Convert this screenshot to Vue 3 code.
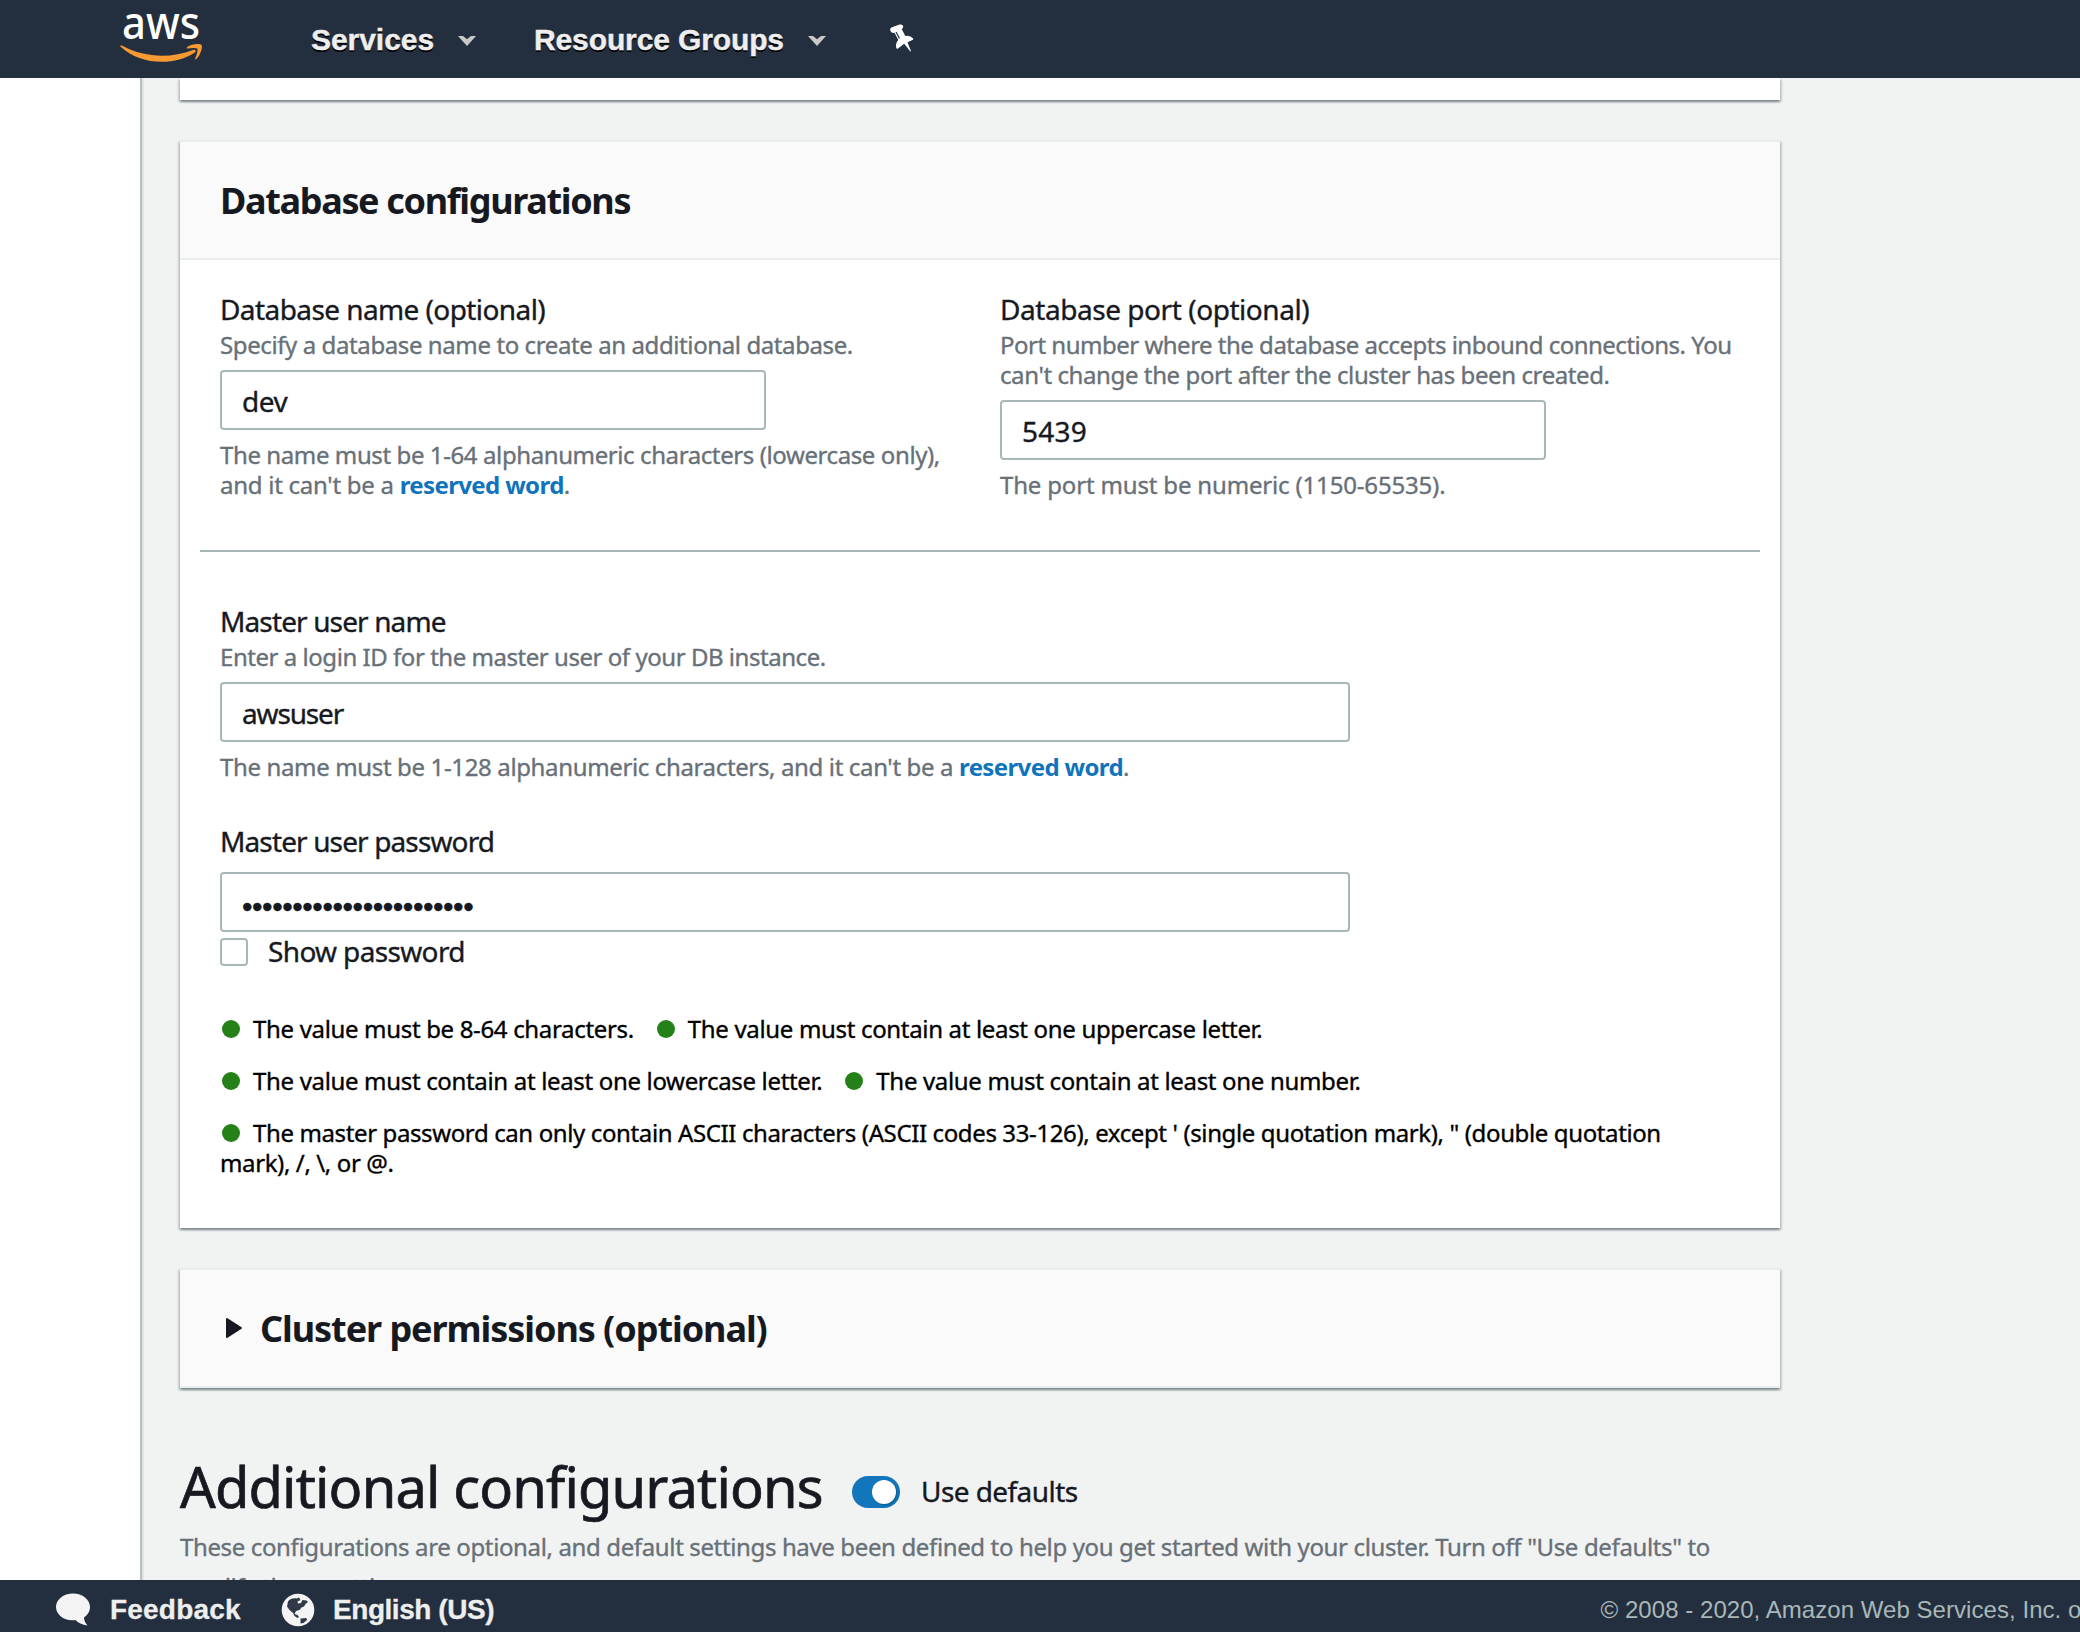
<script setup>
import { ref } from 'vue'

const dbName = ref('dev')
const dbPort = ref('5439')
const userName = ref('awsuser')
const maskedPassword = '•'.repeat(23)

const rules = [
  ['The value must be 8-64 characters.', 'The value must contain at least one uppercase letter.'],
  ['The value must contain at least one lowercase letter.', 'The value must contain at least one number.'],
  ['The master password can only contain ASCII characters (ASCII codes 33-126), except \' (single quotation mark), " (double quotation mark), /, \\, or @.']
]
</script>

<template>
  <div class="page">
    <header class="topbar">
      <svg class="logo" width="84" height="54" viewBox="0 0 84 54">
        <text x="2" y="31" textLength="78" lengthAdjust="spacingAndGlyphs" class="logo-text">aws</text>
        <path d="M0.300 38.500 C0 37.500 1.200 37 2.500 37.800 C25 50 51 50.500 73 42 C75.500 41 76.800 43 74.800 44.500 C54 58.500 20 57 0.300 38.500 Z" fill="#f79a33" />
        <path d="M67 39.200 C71 35.700 80 35.500 81.500 37 C83 39 80.500 47 76.500 51 C75.500 51.800 74.800 51.300 75.300 50.200 C76.800 46.500 78.300 42 77.300 40.700 C76.300 39.500 71.500 39.900 68 40.400 C66.500 40.600 66 40 67 39.200 Z" fill="#f79a33" />
      </svg>
      <a class="nav services">Services</a>
      <svg class="caret" width="20" height="12" viewBox="0 0 20 12"><path d="M1 1 H6 L10 4.200 L14 1 H19 L10 11 Z" fill="#c9c9c9" /></svg>
      <a class="nav groups">Resource Groups</a>
      <svg class="caret" width="20" height="12" viewBox="0 0 20 12"><path d="M1 1 H6 L10 4.200 L14 1 H19 L10 11 Z" fill="#c9c9c9" /></svg>
      <svg class="pin" width="26" height="30" viewBox="0 0 26 30">
        <path d="M1.500 7 Q0.500 4.500 2.500 3.500 L10.500 0.600 Q13.500 0 14.200 2 Q14.500 4 12.800 5.200 L16.300 12 Q21 10.700 24.200 14.500 Q24.500 15.500 23.500 16 L18.500 18.300 L22 27 L21.300 27.500 L15.200 19.800 L9 24.500 Q7.600 25.200 7.300 24 Q6.200 19 9.300 16 L5.500 8.800 Q2.500 9.300 1.500 7 Z" fill="#fff" />
        <path d="M7 8 L10.500 14.500" stroke="#232f3e" stroke-width="1.200" />
      </svg>
    </header>

    <div class="shell">
      <aside class="side"></aside>
      <main class="content">
        <section class="card previous"></section>

        <section class="card">
          <div class="card-head"><h2 class="t-db">Database configurations</h2></div>
          <div class="card-body">
            <div class="columns">
              <div class="field">
                <label class="label">Database name (optional)</label>
                <p class="desc">Specify a database name to create an additional database.</p>
                <input v-model="dbName" class="input short" type="text" />
                <p class="desc">The name must be 1-64 alphanumeric characters (lowercase only),<br /><span class="lead">and it can't be a </span><a class="link">reserved word</a>.</p>
              </div>
              <div class="field">
                <label class="label port-label">Database port (optional)</label>
                <p class="desc port">Port number where the database accepts inbound connections. You<br /><span class="second">can't change the port after the cluster has been created.</span></p>
                <input v-model="dbPort" class="input short digits" type="text" />
                <p class="desc numeric">The port must be numeric (1150-65535).</p>
              </div>
            </div>
            <div class="divider"></div>
            <div class="field">
              <label class="label master">Master user name</label>
              <p class="desc login">Enter a login ID for the master user of your DB instance.</p>
              <input v-model="userName" class="input user" type="text" />
              <p class="desc user-hint">The name must be 1-128 alphanumeric characters, and it can't be a <a class="link">reserved word</a>.</p>
            </div>
            <div class="field password">
              <label class="label master">Master user password</label>
              <div class="input masked">{{ maskedPassword }}</div>
              <label class="check"><span class="box"></span><span class="check-text">Show password</span></label>
            </div>
            <div class="rules">
              <p v-for="(row, i) in rules" :key="i" class="rule-row">
                <span v-for="text in row" :key="text" class="rule"><i class="dot"></i>{{ text }}</span>
              </p>
            </div>
          </div>
        </section>

        <section class="card">
          <div class="card-head">
            <svg class="tri" width="18" height="22" viewBox="0 0 18 22"><path d="M2 2 L16 11 L2 20 Z" fill="#16191f" stroke="#16191f" stroke-width="2" stroke-linejoin="round" /></svg>
            <h2 class="t-cluster">Cluster permissions (optional)</h2>
          </div>
        </section>

        <div class="additional">
          <h1>Additional configurations</h1>
          <span class="toggle"><span class="knob"></span></span>
          <span class="toggle-label">Use defaults</span>
        </div>
        <p class="intro">These configurations are optional, and default settings have been defined to help you get started with your cluster. Turn off "Use defaults" to<br />modify these settings now.</p>
      </main>
    </div>

    <footer class="bottombar">
      <svg class="bubble" width="36" height="34" viewBox="0 0 36 34">
        <path d="M18 0.500 C27.500 0.500 35 6.500 35 14 C35 18.500 32.500 22 29 24.500 C29.200 27.500 30.200 30 32.500 32.500 C27 32 23 29.800 20.500 27 C9.500 28.500 1 22 1 14 C1 6.500 8.500 0.500 18 0.500 Z" fill="#f4f4f4" />
      </svg>
      <a class="foot feedback">Feedback</a>
      <svg class="globe" width="34" height="34" viewBox="0 0 34 34">
        <circle cx="17" cy="17" r="16.300" fill="#f4f4f4" />
        <path d="M7 8.500 C9 5.500 12.500 5 15.500 5.500 L18 4.500 L19.500 7 L16.500 8.500 L17 10.500 L20 10 L21.500 7 L25.500 7.500 L27 9 L24.500 11 L23 13.500 L20.500 14.500 L18.500 17 L15 18 L13.500 21 L16.500 22 L18 24 L16.500 25 L13.500 23 L12 20 L8.500 17 L6 13.500 Z" fill="#2f3a48" />
        <path d="M19.500 25.500 L25.500 25 L26 27 L22.500 30 L19.500 30.500 Z" fill="#2f3a48" />
      </svg>
      <a class="foot english">English (US)</a>
      <span class="copyright">© 2008 - 2020, Amazon Web Services, Inc. or its affiliates.</span>
    </footer>
  </div>
</template>

<style>
body { margin: 0; }
</style>

<style scoped>
.page {
  display: flex;
  flex-direction: column;
  width: 2080px;
  height: 1632px;
  overflow: hidden;
  background: #f1f3f3;
  color: #16191f;
  font-family: "Noto Sans", "Open Sans", sans-serif;
}
h1, h2, p { margin: 0; }

.topbar {
  flex: none;
  display: flex;
  align-items: flex-start;
  height: 78px;
  background: #232f3e;
  font-family: "Liberation Sans", Arial, sans-serif;
}
.logo { margin: 8px 0 0 120px; overflow: visible; }
.logo-text { font: 500 46px "Noto Sans", sans-serif; fill: #fff; }
.nav {
  font-size: 30px;
  font-weight: 700;
  line-height: 34px;
  margin-top: 23px;
  color: #eee;
  text-shadow: 0 2px 0 #000;
  white-space: nowrap;
  -webkit-text-stroke: 0.4px #eee;
}
.services { width: 122px; margin-left: 107px; letter-spacing: -0.05px; }
.groups { width: 249px; margin-left: 57px; letter-spacing: -0.12px; }
.caret { margin: 35px 0 0 24px; }
.pin { margin: 24px 0 0 62px; }

.shell { flex: 1; min-height: 0; display: flex; overflow: hidden; }
.side {
  flex: none;
  width: 140px;
  background: #fff;
  border-right: 2px solid #b9c1c3;
  box-shadow: 1px 0 2px rgba(0, 28, 36, 0.15);
}
.content { width: 1600px; margin-left: 38px; -webkit-text-stroke: 0.35px currentColor; }

.card {
  box-sizing: border-box;
  margin-bottom: 40px;
  background: #fff;
  border-top: 2px solid #eaeded;
  box-shadow: 0 2px 2px 0 rgba(0, 28, 36, 0.3), 2px 2px 2px 0 rgba(0, 28, 36, 0.15), -2px 2px 2px 0 rgba(0, 28, 36, 0.15);
}
.previous { height: 22px; border-top: 0; }
.card-head {
  display: flex;
  align-items: center;
  height: 116px;
  padding: 0 40px;
  background: #fafafa;
  border-bottom: 2px solid #eaeded;
}
h2 { margin-top: 2px; font-size: 36px; font-weight: 700; line-height: 50px; white-space: nowrap; -webkit-text-stroke: 0; }
.t-db { letter-spacing: -1.34px; }
.t-cluster { letter-spacing: -1.06px; }
.tri { margin: -1px 17px 0 5px; }

.card-body { padding: 32px 40px 50px; }
.columns { display: grid; grid-template-columns: 780px 740px; }
.field { display: flex; flex-direction: column; }
.label { font-size: 28px; line-height: 34px; margin-bottom: 4px; letter-spacing: -0.58px; }
.port-label { letter-spacing: -0.45px; }
.master { letter-spacing: -0.87px; }
.desc { font-size: 24px; line-height: 30px; color: #687078; letter-spacing: -0.4px; white-space: nowrap; }
.desc.port { letter-spacing: -0.5px; }
.second { letter-spacing: -0.4px; }
.lead { letter-spacing: -0.27px; }
.desc.numeric { letter-spacing: -0.17px; }
.desc.login { letter-spacing: -0.46px; }
.desc.user-hint { letter-spacing: -0.36px; }
.link { color: #0f74bb; font-weight: 700; letter-spacing: -0.62px; -webkit-text-stroke: 0; }
.input {
  box-sizing: border-box;
  width: 1130px;
  height: 60px;
  margin: 10px 0;
  padding: 2px 20px 0;
  border: 2px solid #aab7b8;
  border-radius: 4px;
  background: #fff;
  color: #16191f;
  font-family: inherit;
  font-size: 28px;
  letter-spacing: -0.5px;
  outline: 0;
  -webkit-text-stroke: 0.35px currentColor;
}
.input.digits { letter-spacing: 0.2px; }
.input.user { letter-spacing: -1.15px; }
.input.short { width: 546px; }
.divider { height: 2px; margin: 50px -20px 52px; background: #aab7b8; }
.password { margin-top: 42px; }
.input.masked { margin-bottom: 6px; padding-top: 0; font: 30px/65px "Liberation Sans", sans-serif; letter-spacing: -0.45px; }
.check {
  display: flex;
  align-items: center;
  height: 28px;
  gap: 20px;
  font-size: 28px;
  line-height: 28px;
  letter-spacing: -0.65px;
}
.check-text { margin-top: -2px; }
.box { box-sizing: border-box; width: 28px; height: 28px; border: 2px solid #aab7b8; border-radius: 4px; }

.rules { display: flex; flex-direction: column; gap: 22px; margin-top: 48px; padding-right: 60px; }
.rule-row { font-size: 24px; line-height: 30px; color: #000; letter-spacing: -0.33px; }
.rule-row:last-child { letter-spacing: -0.38px; }
.rule { margin-right: 21px; }
.dot {
  display: inline-block;
  width: 18px;
  height: 18px;
  margin: 0 13px 0 2px;
  border-radius: 50%;
  background: #248117;
}

.additional { display: flex; align-items: center; margin-top: 64px; height: 68px; }
h1 { font-size: 56px; font-weight: 400; line-height: 68px; letter-spacing: -0.86px; width: 672px; white-space: nowrap; -webkit-text-stroke: 0.7px currentColor; }
.toggle {
  box-sizing: border-box;
  width: 48px;
  height: 32px;
  margin-top: 12px;
  padding: 4px;
  border-radius: 16px;
  background: #1176bc;
  display: flex;
  justify-content: flex-end;
}
.knob { width: 24px; height: 24px; border-radius: 50%; background: #fff; box-shadow: 1px 1px 2px rgba(0, 28, 36, 0.3); }
.toggle-label { margin: 10px 0 0 21px; font-size: 28px; letter-spacing: -0.57px; }
.intro { margin-top: 7px; font-size: 24px; line-height: 40px; color: #687078; letter-spacing: -0.365px; white-space: nowrap; }

.bottombar {
  flex: none;
  display: flex;
  align-items: flex-start;
  height: 52px;
  overflow: hidden;
  background: #232f3e;
  font-family: "Liberation Sans", Arial, sans-serif;
}
.bubble { flex: none; margin: 13px 0 0 55px; }
.foot { flex: none; margin-top: 14px; font-size: 28px; font-weight: 700; line-height: 32px; color: #eee; white-space: nowrap; -webkit-text-stroke: 0.3px #eee; }
.feedback { margin-left: 19px; width: 131px; letter-spacing: 0.2px; }
.globe { flex: none; margin: 13px 0 0 40px; }
.english { margin-left: 18px; width: 160px; letter-spacing: -0.45px; }
.copyright { flex: none; margin: 16px 0 0 1107.500px; font-size: 24px; line-height: 27px; color: #aab7b8; white-space: nowrap; letter-spacing: 0.05px; }
</style>
